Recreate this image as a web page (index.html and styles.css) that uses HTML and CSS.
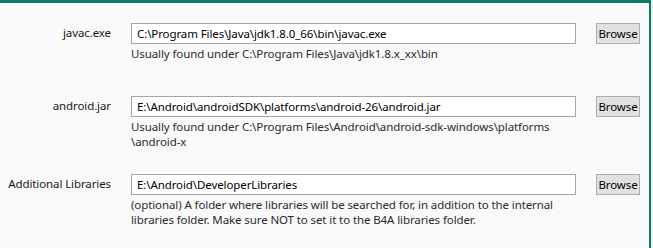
FILE: index.html
```html
<!DOCTYPE html>
<html lang="en">
<head>
    <meta charset="UTF-8">
    <title>Paths</title>
    <link rel="stylesheet" href="styles.css">
</head>
<body>

    <!-- Paths panel -->
    <div class="panel">

        <div class="row row-short">
            <label class="label">javac.exe</label>
            <input class="path" type="text" value="C:\Program Files\Java\jdk1.8.0_66\bin\javac.exe">
            <button class="browse">Browse</button>
            <div class="hint">Usually found under C:\Program Files\Java\jdk1.8.x_xx\bin</div>
        </div>

        <div class="row row-tall">
            <label class="label">android.jar</label>
            <input class="path" type="text" value="E:\Android\androidSDK\platforms\android-26\android.jar">
            <button class="browse">Browse</button>
            <div class="hint">Usually found under C:\Program Files\Android\android-sdk-windows\platforms<br>\android-x</div>
        </div>

        <div class="row">
            <label class="label">Additional Libraries</label>
            <input class="path" type="text" value="E:\Android\DeveloperLibraries">
            <button class="browse">Browse</button>
            <div class="hint">(optional) A folder where libraries will be searched for, in addition to the internal<br>libraries folder. Make sure NOT to set it to the B4A libraries folder.</div>
        </div>

    </div>

</body>
</html>
```

FILE: styles.css
```css
/* General */
body {
    margin: 0;
    background: #e4f1ee;
    font-family: "Noto Sans", "Open Sans", sans-serif;
    font-size: 11.5px;
    letter-spacing: -0.1px;
    color: #000;
}

/* Panel */
.panel {
    box-sizing: border-box;
    width: 651px;
    height: 248px;
    background: #f9f9f9;
    border-top: 3px solid #0e7a6b;
    border-right: 2px solid #0e7a6b;
    padding-top: 20px;
}

/* Rows */
.row {
    display: grid;
    grid-template-columns: 111px 445px 44px;
    column-gap: 20px;
}

.row-short {
    margin-bottom: 35px;
}

.row-tall {
    margin-bottom: 25px;
}

.label {
    text-align: right;
    line-height: 19px;
    color: #1a1a1a;
}

.path {
    box-sizing: border-box;
    height: 21px;
    margin: 0;
    padding: 0 5px;
    border: 1px solid #a5a5a5;
    background: #fff;
    font-family: inherit;
    font-size: 11.5px;
    letter-spacing: -0.1px;
    color: #000;
    outline: none;
}

.browse {
    box-sizing: border-box;
    height: 21px;
    margin: 0;
    padding: 0;
    border: 1px solid #adadad;
    background: #e1e1e1;
    font-family: inherit;
    font-size: 11.5px;
    letter-spacing: -0.1px;
    color: #000;
}

.hint {
    grid-column: 2 / 4;
    margin-top: 2px;
    line-height: 15px;
    color: #2b2b2b;
}
```
